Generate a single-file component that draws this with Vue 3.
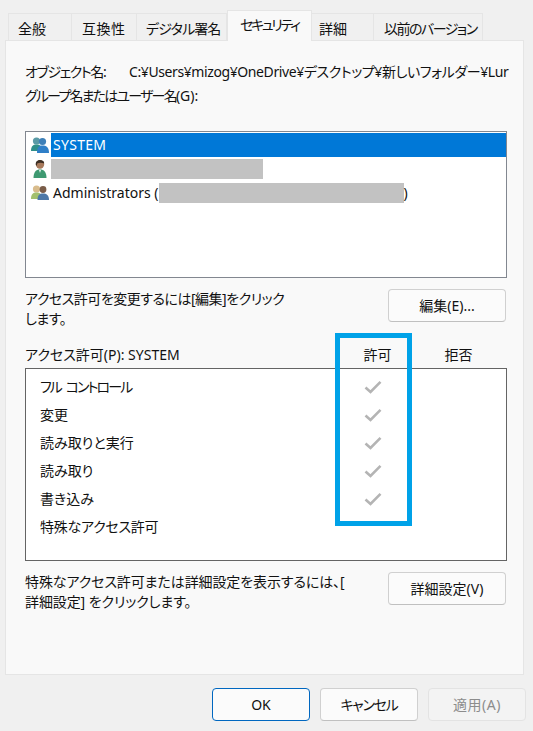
<script setup>
const tabs = [
  { label: '全般', w: 64, pad: 9, ls: 0 },
  { label: '互換性', w: 65, pad: 10, ls: 0.5 },
  { label: 'デジタル署名', w: 90, pad: 9, ls: -0.9 },
  { label: 'セキュリティ', w: 85, pad: 12, ls: -2.3, active: true },
  { label: '詳細', w: 62, pad: 7, ls: 0 },
  { label: '以前のバージョン', w: 109, pad: 10, ls: -1.5 },
]
const perms = [
  { label: 'フル コントロール', ok: true, ls: -1.9 },
  { label: '変更', ok: true, ls: 0 },
  { label: '読み取りと実行', ok: true, ls: 0 },
  { label: '読み取り', ok: true, ls: 0 },
  { label: '書き込み', ok: true, ls: 0 },
  { label: '特殊なアクセス許可', ok: false, ls: -0.25 },
]
</script>

<template>
  <div class="win">
    <div class="tabs">
      <div
        v-for="t in tabs"
        :key="t.label"
        class="tab"
        :class="{ active: t.active }"
        :style="{ width: t.w + 'px', paddingLeft: t.pad + 'px', letterSpacing: t.ls + 'px' }"
      >{{ t.label }}</div>
    </div>
    <div class="panel">
      <div class="obj">
        <span class="obj-l">オブジェクト名:</span>
        <span class="obj-v">C:¥Users¥mizog¥OneDrive¥デスクトップ¥新しいフォルダー¥Lur</span>
      </div>
      <div class="grp">グループ名またはユーザー名<span class="nols">(G):</span></div>
      <div class="list">
        <div class="urow">
          <svg class="uicon" viewBox="0 0 18 18" width="18" height="18">
            <circle cx="5.500" cy="5" r="3.600" fill="#5a9aa6" />
            <path d="M0 15c0-5 2-6.500 5.500-6.500S11 10 11 15z" fill="#2f8f8a" />
            <circle cx="11.500" cy="5.500" r="3.600" fill="#3d7fb8" />
            <path d="M6 17c0-6 2-7.500 5.500-7.500S18 11 18 17z" fill="#2f7fc8" />
          </svg>
          <span class="utext sel">SYSTEM</span>
        </div>
        <div class="urow">
          <svg class="uicon" viewBox="0 0 18 20" width="18" height="20">
            <circle cx="9" cy="5.500" r="4.200" fill="#a87a5c" />
            <path d="M4.800 5.500C4.500 2.500 6.500 1 9 1s4.500 1.500 4.200 3.500C11 3.500 8 3.500 6.200 4.500l-.4 2.500z" fill="#3d2f25" />
            <path d="M2.500 19c0-6 2.500-8.500 6.500-8.500s6.500 2.500 6.500 8.500z" fill="#3f9a72" />
            <path d="M8 11h2l-1 3z" fill="#e8f4ee" />
          </svg>
          <span class="utext mask"></span>
        </div>
        <div class="urow">
          <svg class="uicon" viewBox="0 0 18 18" width="18" height="18">
            <circle cx="5.500" cy="5" r="3.600" fill="#d9bc8c" />
            <path d="M0 15c0-5 2-6.500 5.500-6.500S11 10 11 15z" fill="#a3c06e" />
            <circle cx="12" cy="5.500" r="3.400" fill="#7a5c48" />
            <path d="M6.500 16c0-5 2-6.500 5.500-6.500S18 11 18 16z" fill="#4d78a8" />
          </svg>
          <span class="utext">Administrators (<span class="mask inl"></span>)</span>
        </div>
      </div>
      <div class="act">
        <p class="hint tight">アクセス許可を変更するには[編集]をクリック<br>します。</p>
        <button class="btn">編集(E)...</button>
      </div>
      <div class="phead">
        <span class="pname">アクセス許可(P): SYSTEM</span>
        <span class="pcol">許可</span>
        <span class="pcol">拒否</span>
      </div>
      <div class="perm">
        <div v-for="p in perms" :key="p.label" class="prow">
          <span class="plabel" :style="{ letterSpacing: p.ls + 'px' }">{{ p.label }}</span>
          <svg v-if="p.ok" class="chk" viewBox="0 0 18 14" width="18" height="14">
            <path d="M1.500 7.500 6.500 12 16.500 1.800" fill="none" stroke="#b4b4b4" stroke-width="2.600" />
          </svg>
        </div>
      </div>
      <div class="act act2">
        <p class="hint tight2">特殊なアクセス許可または詳細設定を表示するには、[<br>詳細設定] をクリックします。</p>
        <button class="btn">詳細設定(V)</button>
      </div>
    </div>
    <div class="foot">
      <button class="btn fbtn def">OK</button>
      <button class="btn fbtn cancel">キャンセル</button>
      <button class="btn fbtn dis" disabled>適用(A)</button>
    </div>
    <div class="mark"></div>
  </div>
</template>

<style>
html, body { margin: 0; background: #f0f0f0; }
</style>

<style scoped>
.win {
  position: relative;
  width: 533px;
  height: 731px;
  box-sizing: border-box;
  padding: 10px 9px 0 5px;
  background: #f0f0f0;
  color: #111;
  font: 14px/20px "Noto Sans", "Noto Sans CJK JP", sans-serif;
  font-feature-settings: "palt";
  overflow: hidden;
}
.tabs {
  display: flex;
  align-items: flex-end;
  height: 30px;
  padding-left: 3px;
}
.tab {
  height: 27px;
  box-sizing: border-box;
  border: 1px solid #e5e5e5;
  border-bottom: none;
  background: #f0f0f0;
  line-height: 29px;
  white-space: nowrap;
}
.tab + .tab { border-left: none; }
.tab.active {
  height: 31px;
  margin-bottom: -1px;
  background: #f9f9f9;
  border-left: 1px solid #e5e5e5;
  position: relative;
  z-index: 1;
  line-height: 27px;
}
.panel {
  height: 635px;
  box-sizing: border-box;
  border: 1px solid #e5e5e5;
  background: #f9f9f9;
  padding: 21px 16px 0 19px;
}
.obj {
  display: flex;
  height: 24px;
  white-space: nowrap;
}
.obj-l { width: 104px; flex: none; letter-spacing: -1.4px; }
.obj-v { letter-spacing: -0.4px; }
.grp { height: 24px; letter-spacing: -1.8px; }
.nols { letter-spacing: 0; }
.list {
  margin-top: 21px;
  height: 147px;
  box-sizing: border-box;
  border: 1px solid #828790;
  background: #fff;
  padding: 1px 0 0 5px;
}
.urow {
  display: flex;
  align-items: center;
  height: 24px;
}
.uicon { flex: none; margin-right: 2px; }
.utext {
  flex: 1;
  height: 24px;
  line-height: 24px;
  padding-left: 2px;
}
.utext.sel { background: #0078d7; color: #fff; letter-spacing: 0.3px; }
.utext.mask {
  flex: none;
  width: 212px;
  height: 20px;
  padding: 0;
  background: #c2c2c2;
}
.mask.inl {
  display: inline-block;
  width: 245px;
  height: 20px;
  vertical-align: -5px;
  background: #c2c2c2;
}
.act {
  display: flex;
  justify-content: space-between;
  margin-top: 11px;
  margin-right: 1px;
  height: 45px;
}
.hint {
  margin: 0;
  white-space: nowrap;
}
.hint.tight { letter-spacing: -0.5px; }
.hint.tight2 { letter-spacing: -0.1px; }
.btn {
  box-sizing: border-box;
  width: 118px;
  height: 33px;
  border: 1px solid #d0d0d0;
  border-bottom-color: #c0c0c0;
  border-radius: 4px;
  background: #fbfbfb;
  color: #111;
  font: inherit;
  font-feature-settings: inherit;
  padding: 0;
}
.phead {
  display: flex;
  align-items: center;
  box-sizing: border-box;
  height: 24px;
  padding-bottom: 2px;
  margin-top: 10px;
}
.pname { width: 312px; }
.pcol { width: 81px; text-align: center; }
.perm {
  height: 193px;
  box-sizing: border-box;
  border: 1px solid #646464;
  background: #fff;
  padding: 4px 0 0 14px;
}
.prow {
  display: flex;
  align-items: center;
  height: 28px;
}
.plabel { width: 323px; flex: none; white-space: pre; word-spacing: 3px; }
.chk { display: block; margin-left: 1px; }
.act2 { margin-top: 11px; }
.foot {
  display: flex;
  gap: 10px;
  justify-content: flex-end;
  margin-top: 13px;
  margin-right: -2px;
}
.fbtn { width: 98px; }
.cancel { letter-spacing: -1.3px; }
.def { border: 1px solid #0067c0; }
.dis {
  background: #f3f3f3;
  border-color: #e3e3e3;
  color: #8c8c8c;
  letter-spacing: 0.5px;
}
.mark {
  position: absolute;
  left: 335px;
  top: 333px;
  width: 77px;
  height: 193px;
  box-sizing: border-box;
  border: 5px solid #00a2e8;
  pointer-events: none;
}
</style>
